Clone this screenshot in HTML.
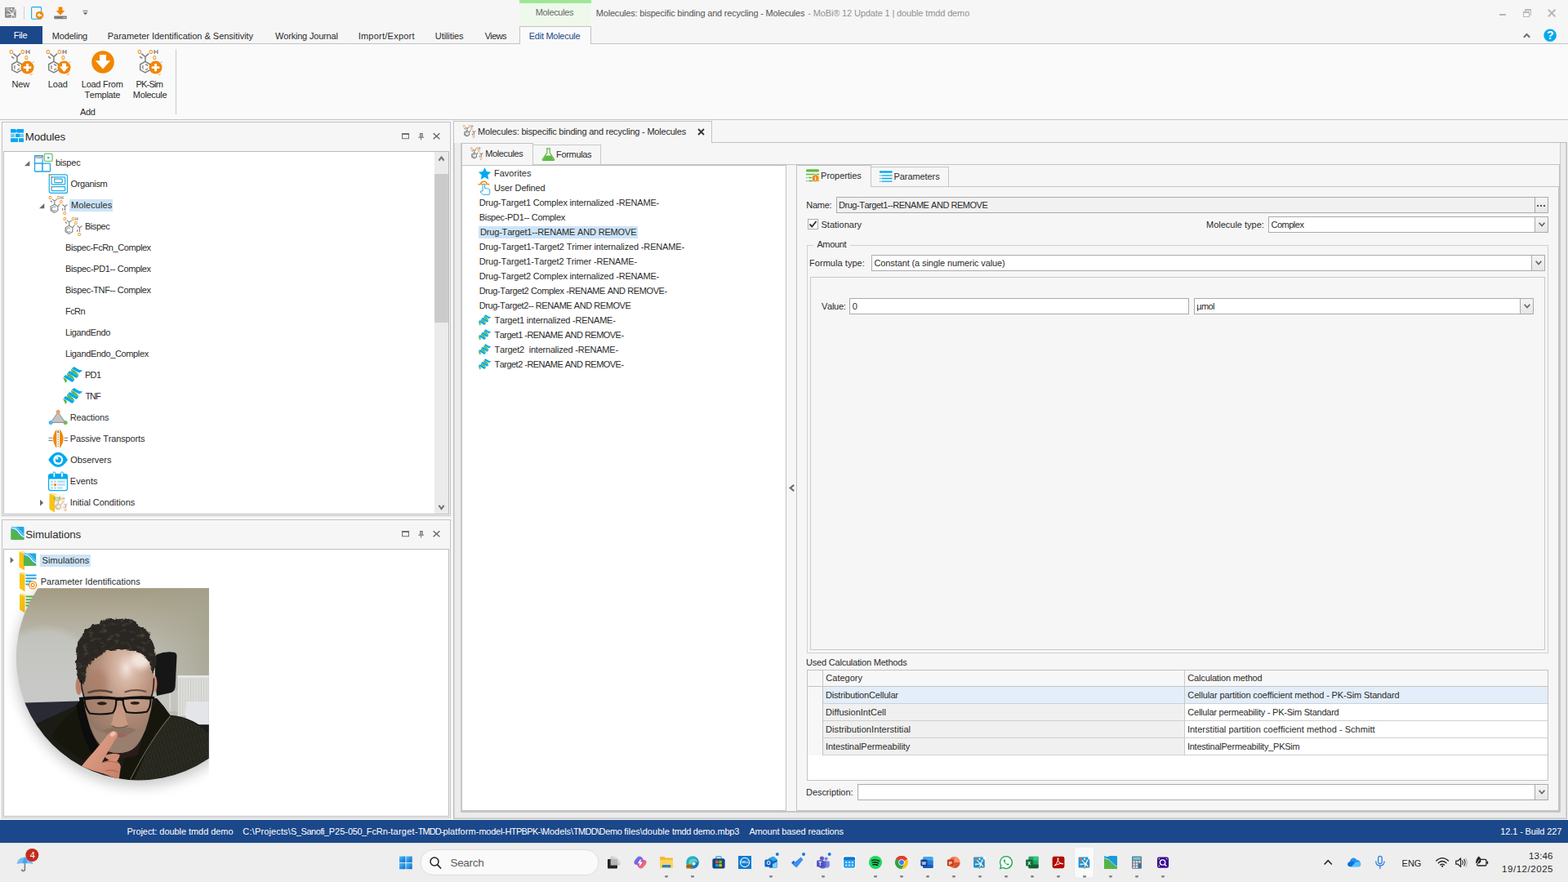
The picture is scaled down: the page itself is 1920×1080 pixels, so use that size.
<!DOCTYPE html>
<html lang="en"><head><meta charset="utf-8"><title>MoBi - Molecules</title>
<style>
html,body{margin:0;padding:0;}
body{width:1920px;height:1080px;overflow:hidden;background:#f6f6f6;font-family:"Liberation Sans",sans-serif;position:relative;}
.a{position:absolute;box-sizing:border-box;display:block;}
.t{position:absolute;white-space:pre;font-family:"Liberation Sans",sans-serif;font-kerning:none;font-variant-ligatures:none;}
svg{overflow:visible;}
</style></head><body>
<div class="a " style="left:0px;top:0px;width:1920px;height:54px;background:#f6f6f6;"></div>
<div class="a " style="left:636px;top:0px;width:88px;height:32px;background:#eef9ec;"></div>
<div class="a " style="left:636px;top:0px;width:88px;height:4px;background:#9fe797;"></div>
<div class="a " style="left:0px;top:54px;width:1920px;height:92px;background:#fafafa;"></div>
<div class="a " style="left:0px;top:53px;width:1920px;height:1px;background:#c3c3c3;"></div>
<div class="a " style="left:0px;top:146px;width:1920px;height:1px;background:#c3c3c3;"></div>
<div class="a " style="left:0px;top:32px;width:52px;height:22px;background:#1b488a;"></div>
<span class="t" style="left:16.80px;top:36px;font-size:11px;line-height:14px;color:#fff;letter-spacing:-0.311px;">File</span>
<div class="a " style="left:636px;top:32px;width:88px;height:22px;background:#fafafa;border:1px solid #c3c3c3;border-bottom:none;"></div>
<span class="t" style="left:63.80px;top:37px;font-size:11px;line-height:14px;color:#2b2b2b;letter-spacing:-0.175px;">Modeling</span>
<span class="t" style="left:131.80px;top:37px;font-size:11px;line-height:14px;color:#2b2b2b;letter-spacing:-0.022px;">Parameter Identification &amp; Sensitivity</span>
<span class="t" style="left:337.05px;top:37px;font-size:11px;line-height:14px;color:#2b2b2b;letter-spacing:-0.192px;">Working Journal</span>
<span class="t" style="left:438.68px;top:37px;font-size:11px;line-height:14px;color:#2b2b2b;letter-spacing:0.240px;">Import/Export</span>
<span class="t" style="left:532.85px;top:37px;font-size:11px;line-height:14px;color:#2b2b2b;letter-spacing:-0.100px;">Utilities</span>
<span class="t" style="left:593.65px;top:37px;font-size:11px;line-height:14px;color:#2b2b2b;letter-spacing:-0.624px;">Views</span>
<span class="t" style="left:647.80px;top:37px;font-size:11px;line-height:14px;color:#1b488a;letter-spacing:-0.270px;">Edit Molecule</span>
<span class="t" style="left:655.80px;top:8px;font-size:11px;line-height:14px;color:#686868;letter-spacing:-0.353px;">Molecules</span>
<span class="t" style="left:729.80px;top:9px;font-size:11px;line-height:14px;color:#555;letter-spacing:-0.201px;">Molecules: bispecific binding and recycling - Molecules</span>
<span class="t" style="left:989.21px;top:9px;font-size:11px;line-height:14px;color:#929292;letter-spacing:-0.133px;">- MoBi® 12 Update 1 | double tmdd demo</span>
<span class="t" style="left:14.50px;top:96px;font-size:11px;line-height:14px;color:#2b2b2b;letter-spacing:-0.215px;">New</span>
<span class="t" style="left:58.80px;top:96px;font-size:11px;line-height:14px;color:#2b2b2b;letter-spacing:-0.153px;">Load</span>
<span class="t" style="left:99.80px;top:96px;font-size:11px;line-height:14px;color:#2b2b2b;letter-spacing:-0.270px;">Load From</span>
<span class="t" style="left:103.45px;top:109px;font-size:11px;line-height:14px;color:#2b2b2b;letter-spacing:-0.288px;">Template</span>
<span class="t" style="left:166.50px;top:96px;font-size:11px;line-height:14px;color:#2b2b2b;letter-spacing:-0.791px;">PK-Sim</span>
<span class="t" style="left:162.80px;top:109px;font-size:11px;line-height:14px;color:#2b2b2b;letter-spacing:-0.319px;">Molecule</span>
<span class="t" style="left:98.08px;top:130px;font-size:11px;line-height:14px;color:#2b2b2b;letter-spacing:-0.421px;">Add</span>
<div class="a " style="left:215px;top:60px;width:1px;height:80px;background:#c9c9c9;"></div>
<div class="a " style="left:2px;top:149px;width:550px;height:483px;background:#f6f6f6;border:1px solid #c3c3c3;"></div>
<div class="a " style="left:4px;top:185px;width:546px;height:445px;background:#fff;border:1px solid #bcbcbc;"></div>
<span class="t" style="left:30.81px;top:159px;font-size:13.33px;line-height:17px;color:#2b2b2b;letter-spacing:-0.152px;">Modules</span>
<div class="a " style="left:2px;top:636px;width:550px;height:366px;background:#f6f6f6;border:1px solid #c3c3c3;"></div>
<div class="a " style="left:4px;top:672px;width:546px;height:328px;background:#fff;border:1px solid #bcbcbc;"></div>
<span class="t" style="left:31.29px;top:646px;font-size:13.33px;line-height:17px;color:#2b2b2b;letter-spacing:-0.092px;">Simulations</span>
<div class="a " style="left:532px;top:186px;width:17px;height:443px;background:#ebebeb;"></div>
<div class="a " style="left:532px;top:213px;width:17px;height:182px;background:#cbcbcb;"></div>
<div class="a " style="left:85px;top:244px;width:53px;height:15px;background:#cde4f7;"></div>
<span class="t" style="left:67.89px;top:192px;font-size:11px;line-height:14px;color:#2b2b2b;letter-spacing:-0.200px;">bispec</span>
<span class="t" style="left:86.48px;top:218px;font-size:11px;line-height:14px;color:#2b2b2b;letter-spacing:-0.348px;">Organism</span>
<span class="t" style="left:87.00px;top:244px;font-size:11px;line-height:14px;color:#2b2b2b;letter-spacing:0.085px;">Molecules</span>
<span class="t" style="left:103.90px;top:270px;font-size:11px;line-height:14px;color:#2b2b2b;letter-spacing:-0.425px;">Bispec</span>
<span class="t" style="left:80.00px;top:296px;font-size:11px;line-height:14px;color:#2b2b2b;letter-spacing:-0.409px;">Bispec-FcRn_Complex</span>
<span class="t" style="left:80.00px;top:322px;font-size:11px;line-height:14px;color:#2b2b2b;letter-spacing:-0.355px;">Bispec-PD1-- Complex</span>
<span class="t" style="left:80.00px;top:348px;font-size:11px;line-height:14px;color:#2b2b2b;letter-spacing:-0.354px;">Bispec-TNF-- Complex</span>
<span class="t" style="left:80.00px;top:374px;font-size:11px;line-height:14px;color:#2b2b2b;letter-spacing:-0.555px;">FcRn</span>
<span class="t" style="left:80.00px;top:400px;font-size:11px;line-height:14px;color:#2b2b2b;letter-spacing:-0.384px;">LigandEndo</span>
<span class="t" style="left:80.00px;top:426px;font-size:11px;line-height:14px;color:#2b2b2b;letter-spacing:-0.354px;">LigandEndo_Complex</span>
<span class="t" style="left:103.90px;top:452px;font-size:11px;line-height:14px;color:#2b2b2b;letter-spacing:-0.629px;">PD1</span>
<span class="t" style="left:104.55px;top:478px;font-size:11px;line-height:14px;color:#2b2b2b;letter-spacing:-1.147px;">TNF</span>
<span class="t" style="left:85.80px;top:504px;font-size:11px;line-height:14px;color:#2b2b2b;letter-spacing:-0.152px;">Reactions</span>
<span class="t" style="left:85.80px;top:530px;font-size:11px;line-height:14px;color:#2b2b2b;letter-spacing:-0.144px;">Passive Transports</span>
<span class="t" style="left:86.18px;top:556px;font-size:11px;line-height:14px;color:#2b2b2b;letter-spacing:-0.065px;">Observers</span>
<span class="t" style="left:85.80px;top:582px;font-size:11px;line-height:14px;color:#2b2b2b;letter-spacing:0.014px;">Events</span>
<span class="t" style="left:85.68px;top:608px;font-size:11px;line-height:14px;color:#2b2b2b;letter-spacing:-0.071px;">Initial Conditions</span>
<div class="a " style="left:49px;top:679px;width:62px;height:15px;background:#cde4f7;"></div>
<span class="t" style="left:51.50px;top:679px;font-size:11px;line-height:14px;color:#2b2b2b;letter-spacing:0.084px;">Simulations</span>
<span class="t" style="left:49.70px;top:705px;font-size:11px;line-height:14px;color:#2b2b2b;letter-spacing:0.014px;">Parameter Identifications</span>
<div class="a " style="left:555px;top:174px;width:1364px;height:829px;background:#ececec;border:1px solid #c0c0c0;"></div>
<div class="a " style="left:556px;top:175px;width:1362px;height:827px;border:1px solid #d6d6d6;border-top:none;"></div>
<div class="a " style="left:555px;top:148px;width:317px;height:27px;background:#f6f6f6;border:1px solid #c3c3c3;border-bottom:none;"></div>
<span class="t" style="left:585.10px;top:154px;font-size:11px;line-height:14px;color:#2b2b2b;letter-spacing:-0.212px;">Molecules: bispecific binding and recycling - Molecules</span>
<svg class="a" style="left:854px;top:157px;" width="9" height="9" viewBox="0 0 9 9"><path d="M1 1 L8 8 M8 1 L1 8" stroke="#333" stroke-width="1.8" fill="none"/></svg>
<div class="a " style="left:564px;top:175px;width:1347px;height:820px;background:#f6f6f6;border:1px solid #c9c9c9;border-top:none;"></div>
<div class="a " style="left:565px;top:201px;width:1345px;height:793px;background:#f6f6f6;border:1px solid #c3c3c3;"></div>
<div class="a " style="left:565px;top:175px;width:88px;height:27px;background:#f6f6f6;border:1px solid #c3c3c3;border-bottom:none;"></div>
<div class="a " style="left:652px;top:177px;width:84px;height:25px;background:#f6f6f6;border:1px solid #c9c9c9;"></div>
<span class="t" style="left:594.30px;top:181px;font-size:11px;line-height:14px;color:#2b2b2b;letter-spacing:-0.390px;">Molecules</span>
<span class="t" style="left:681.00px;top:182px;font-size:11px;line-height:14px;color:#2b2b2b;letter-spacing:-0.320px;">Formulas</span>
<div class="a " style="left:565px;top:202px;width:398px;height:791px;background:#fff;border:1px solid #c3c3c3;"></div>
<div class="a " style="left:586px;top:277px;width:195px;height:15px;background:#cde4f7;"></div>
<span class="t" style="left:604.90px;top:205px;font-size:11px;line-height:14px;color:#2b2b2b;letter-spacing:0.046px;">Favorites</span>
<span class="t" style="left:604.95px;top:223px;font-size:11px;line-height:14px;color:#2b2b2b;letter-spacing:-0.131px;">User Defined</span>
<span class="t" style="left:586.80px;top:241px;font-size:11px;line-height:14px;color:#2b2b2b;letter-spacing:-0.199px;">Drug-Target1 Complex internalized -RENAME-</span>
<span class="t" style="left:586.80px;top:259px;font-size:11px;line-height:14px;color:#2b2b2b;letter-spacing:-0.339px;">Bispec-PD1-- Complex</span>
<span class="t" style="left:588.00px;top:277px;font-size:11px;line-height:14px;color:#2b2b2b;letter-spacing:-0.178px;">Drug-Target1--RENAME AND REMOVE</span>
<span class="t" style="left:586.80px;top:295px;font-size:11px;line-height:14px;color:#2b2b2b;letter-spacing:-0.150px;">Drug-Target1-Target2 Trimer internalized -RENAME-</span>
<span class="t" style="left:586.80px;top:313px;font-size:11px;line-height:14px;color:#2b2b2b;letter-spacing:-0.170px;">Drug-Target1-Target2 Trimer -RENAME-</span>
<span class="t" style="left:586.80px;top:331px;font-size:11px;line-height:14px;color:#2b2b2b;letter-spacing:-0.199px;">Drug-Target2 Complex internalized -RENAME-</span>
<span class="t" style="left:586.80px;top:349px;font-size:11px;line-height:14px;color:#2b2b2b;letter-spacing:-0.409px;">Drug-Target2 Complex -RENAME AND REMOVE-</span>
<span class="t" style="left:586.80px;top:367px;font-size:11px;line-height:14px;color:#2b2b2b;letter-spacing:-0.448px;">Drug-Target2-- RENAME AND REMOVE</span>
<span class="t" style="left:605.55px;top:385px;font-size:11px;line-height:14px;color:#2b2b2b;letter-spacing:-0.226px;">Target1 internalized -RENAME-</span>
<span class="t" style="left:605.55px;top:403px;font-size:11px;line-height:14px;color:#2b2b2b;letter-spacing:-0.532px;">Target1 -RENAME AND REMOVE-</span>
<span class="t" style="left:605.55px;top:421px;font-size:11px;line-height:14px;color:#2b2b2b;letter-spacing:-0.213px;">Target2  internalized -RENAME-</span>
<span class="t" style="left:605.55px;top:439px;font-size:11px;line-height:14px;color:#2b2b2b;letter-spacing:-0.532px;">Target2 -RENAME AND REMOVE-</span>
<svg class="a" style="left:965.6px;top:593px;" width="7" height="9" viewBox="0 0 7 9"><path d="M6.2 0.9 L1.6 4.5 L6.2 8.1" fill="none" stroke="#6a6a6a" stroke-width="2"/></svg>
<div class="a " style="left:975px;top:228px;width:934px;height:765px;background:#f6f6f6;border:1px solid #c3c3c3;"></div>
<div class="a " style="left:975px;top:202px;width:92px;height:27px;background:#f6f6f6;border:1px solid #c3c3c3;border-bottom:none;"></div>
<div class="a " style="left:1066px;top:204px;width:96px;height:25px;background:#f6f6f6;border:1px solid #c6c6c6;"></div>
<span class="t" style="left:1005.10px;top:208px;font-size:11px;line-height:14px;color:#2b2b2b;letter-spacing:-0.048px;">Properties</span>
<span class="t" style="left:1094.50px;top:209px;font-size:11px;line-height:14px;color:#2b2b2b;letter-spacing:-0.073px;">Parameters</span>
<span class="t" style="left:987.20px;top:244px;font-size:11px;line-height:14px;color:#2b2b2b;letter-spacing:-0.248px;">Name:</span>
<div class="a " style="left:1024px;top:241px;width:872px;height:20px;background:#f1f1f1;border:1px solid #ababab;"></div>
<div class="a " style="left:1879px;top:241px;width:17px;height:20px;background:linear-gradient(#f4f4f4,#e6e6e6);border:1px solid #ababab;"></div>
<div class="a " style="left:1882px;top:251px;width:2px;height:2px;background:#555;"></div>
<div class="a " style="left:1886px;top:251px;width:2px;height:2px;background:#555;"></div>
<div class="a " style="left:1890px;top:251px;width:2px;height:2px;background:#555;"></div>
<span class="t" style="left:1027.00px;top:244px;font-size:11px;line-height:14px;color:#2b2b2b;letter-spacing:-0.468px;">Drug-Target1--RENAME AND REMOVE</span>
<div class="a " style="left:989px;top:268px;width:13px;height:13px;background:#fff;border:1px solid #ababab;"></div>
<svg class="a" style="left:990px;top:269px;" width="11" height="11" viewBox="0 0 11 11"><path d="M1.5 5.5 L4.2 8.5 L9.5 2" fill="none" stroke="#333" stroke-width="1.9"/></svg>
<span class="t" style="left:1005.50px;top:268px;font-size:11px;line-height:14px;color:#2b2b2b;letter-spacing:0.010px;">Stationary</span>
<span class="t" style="left:1477.00px;top:268px;font-size:11px;line-height:14px;color:#2b2b2b;letter-spacing:-0.009px;">Molecule type:</span>
<div class="a " style="left:1553px;top:265px;width:343px;height:20px;background:#fff;border:1px solid #ababab;"></div>
<div class="a " style="left:1879px;top:265px;width:17px;height:20px;background:linear-gradient(#f4f4f4,#e6e6e6);border:1px solid #ababab;"></div>
<svg class="a" style="left:1883.5px;top:272.0px;" width="8" height="6" viewBox="0 0 8 6"><path d="M0.6 0.8 L4 4.6 L7.4 0.8" fill="none" stroke="#666" stroke-width="1.7"/></svg>
<span class="t" style="left:1556.54px;top:268px;font-size:11px;line-height:14px;color:#2b2b2b;letter-spacing:-0.505px;">Complex</span>
<div class="a " style="left:988px;top:300px;width:908px;height:500px;border:1px solid #d0d0d0;"></div>
<div class="a " style="left:996px;top:292px;width:45px;height:14px;background:#f6f6f6;"></div>
<span class="t" style="left:1000.38px;top:292px;font-size:11px;line-height:14px;color:#2b2b2b;letter-spacing:-0.341px;">Amount</span>
<span class="t" style="left:991.00px;top:315px;font-size:11px;line-height:14px;color:#2b2b2b;letter-spacing:0.047px;">Formula type:</span>
<div class="a " style="left:1067px;top:312px;width:825px;height:20px;background:#fff;border:1px solid #ababab;"></div>
<div class="a " style="left:1875px;top:312px;width:17px;height:20px;background:linear-gradient(#f4f4f4,#e6e6e6);border:1px solid #ababab;"></div>
<svg class="a" style="left:1879.5px;top:319.0px;" width="8" height="6" viewBox="0 0 8 6"><path d="M0.6 0.8 L4 4.6 L7.4 0.8" fill="none" stroke="#666" stroke-width="1.7"/></svg>
<span class="t" style="left:1070.54px;top:315px;font-size:11px;line-height:14px;color:#2b2b2b;letter-spacing:-0.116px;">Constant (a single numeric value)</span>
<div class="a " style="left:992px;top:339px;width:900px;height:457px;border:1px solid #c9c9c9;"></div>
<span class="t" style="left:1006.05px;top:368px;font-size:11px;line-height:14px;color:#2b2b2b;letter-spacing:-0.287px;">Value:</span>
<div class="a " style="left:1040px;top:365px;width:416px;height:20px;background:#fff;border:1px solid #ababab;"></div>
<span class="t" style="left:1043.67px;top:368px;font-size:11px;line-height:14px;color:#2b2b2b;">0</span>
<div class="a " style="left:1462px;top:365px;width:416px;height:20px;background:#fff;border:1px solid #ababab;"></div>
<div class="a " style="left:1861px;top:365px;width:17px;height:20px;background:linear-gradient(#f4f4f4,#e6e6e6);border:1px solid #ababab;"></div>
<svg class="a" style="left:1865.5px;top:372.0px;" width="8" height="6" viewBox="0 0 8 6"><path d="M0.6 0.8 L4 4.6 L7.4 0.8" fill="none" stroke="#666" stroke-width="1.7"/></svg>
<span class="t" style="left:1465.15px;top:368px;font-size:11px;line-height:14px;color:#2b2b2b;letter-spacing:-0.558px;">µmol</span>
<span class="t" style="left:987.05px;top:804px;font-size:11px;line-height:14px;color:#2b2b2b;letter-spacing:-0.207px;">Used Calculation Methods</span>
<div class="a " style="left:988px;top:820px;width:908px;height:136px;background:#fff;border:1px solid #c3c3c3;"></div>
<div class="a " style="left:989px;top:821px;width:906px;height:20px;background:#f7f7f7;"></div>
<div class="a " style="left:989px;top:840px;width:906px;height:1px;background:#c3c3c3;"></div>
<div class="a " style="left:989px;top:841px;width:19px;height:84px;background:#f7f7f7;"></div>
<div class="a " style="left:1007px;top:821px;width:1px;height:104px;background:#c3c3c3;"></div>
<div class="a " style="left:1450px;top:821px;width:1px;height:104px;background:#c9c9c9;"></div>
<div class="a " style="left:1008px;top:841px;width:887px;height:20px;background:#e3eefa;"></div>
<div class="a " style="left:1008px;top:861px;width:887px;height:1px;background:#d0d0d0;"></div>
<span class="t" style="left:1011.00px;top:844px;font-size:11px;line-height:14px;color:#2b2b2b;letter-spacing:-0.175px;">DistributionCellular</span>
<span class="t" style="left:1454.34px;top:844px;font-size:11px;line-height:14px;color:#2b2b2b;letter-spacing:-0.133px;">Cellular partition coefficient method - PK-Sim Standard</span>
<div class="a " style="left:1008px;top:862px;width:442px;height:20px;background:#f0f0f0;"></div>
<div class="a " style="left:1008px;top:882px;width:887px;height:1px;background:#d0d0d0;"></div>
<span class="t" style="left:1011.00px;top:865px;font-size:11px;line-height:14px;color:#2b2b2b;">DiffusionIntCell</span>
<span class="t" style="left:1454.34px;top:865px;font-size:11px;line-height:14px;color:#2b2b2b;letter-spacing:-0.238px;">Cellular permeability - PK-Sim Standard</span>
<div class="a " style="left:1008px;top:883px;width:442px;height:20px;background:#f0f0f0;"></div>
<div class="a " style="left:1008px;top:903px;width:887px;height:1px;background:#d0d0d0;"></div>
<span class="t" style="left:1011.00px;top:886px;font-size:11px;line-height:14px;color:#2b2b2b;letter-spacing:0.085px;">DistributionInterstitial</span>
<span class="t" style="left:1453.88px;top:886px;font-size:11px;line-height:14px;color:#2b2b2b;letter-spacing:0.033px;">Interstitial partition coefficient method - Schmitt</span>
<div class="a " style="left:1008px;top:904px;width:442px;height:20px;background:#f0f0f0;"></div>
<div class="a " style="left:1008px;top:924px;width:887px;height:1px;background:#d0d0d0;"></div>
<span class="t" style="left:1010.88px;top:907px;font-size:11px;line-height:14px;color:#2b2b2b;letter-spacing:-0.053px;">IntestinalPermeability</span>
<span class="t" style="left:1453.88px;top:907px;font-size:11px;line-height:14px;color:#2b2b2b;letter-spacing:-0.239px;">IntestinalPermeability_PKSim</span>
<div class="a " style="left:1450px;top:821px;width:1px;height:104px;background:#c9c9c9;"></div>
<span class="t" style="left:1011.34px;top:823px;font-size:11px;line-height:14px;color:#2b2b2b;letter-spacing:0.007px;">Category</span>
<span class="t" style="left:1454.34px;top:823px;font-size:11px;line-height:14px;color:#2b2b2b;letter-spacing:-0.165px;">Calculation method</span>
<span class="t" style="left:987.00px;top:963px;font-size:11px;line-height:14px;color:#2b2b2b;letter-spacing:-0.047px;">Description:</span>
<div class="a " style="left:1050px;top:960px;width:846px;height:20px;background:#fff;border:1px solid #ababab;"></div>
<div class="a " style="left:1879px;top:960px;width:17px;height:20px;background:linear-gradient(#f4f4f4,#e6e6e6);border:1px solid #ababab;"></div>
<svg class="a" style="left:1883.5px;top:967.0px;" width="8" height="6" viewBox="0 0 8 6"><path d="M0.6 0.8 L4 4.6 L7.4 0.8" fill="none" stroke="#666" stroke-width="1.7"/></svg>
<div class="a " style="left:0px;top:1004px;width:1920px;height:28px;background:#1b488a;"></div>
<span class="t" style="left:155.50px;top:1011px;font-size:11px;line-height:14px;color:#fff;letter-spacing:-0.058px;">Project: double tmdd demo</span>
<span class="t" style="left:297.34px;top:1011px;font-size:11px;line-height:14px;color:#fff;"><span style="letter-spacing:0.200px">C:\</span><span style="letter-spacing:0.123px">Projects\</span><span style="letter-spacing:-0.429px">S_Sanofi_</span><span style="letter-spacing:-0.016px">P25-</span><span style="letter-spacing:-0.411px">050_</span><span style="letter-spacing:-0.102px">FcRn-</span><span style="letter-spacing:0.261px">target-</span><span style="letter-spacing:-0.979px">TMDD-</span><span style="letter-spacing:0.064px">platform-</span><span style="letter-spacing:-0.249px">model-</span><span style="letter-spacing:-0.654px">HTPBPK-\</span><span style="letter-spacing:-0.094px">Models\</span><span style="letter-spacing:-0.636px">TMDD\</span><span style="letter-spacing:-0.330px">Demo </span><span style="letter-spacing:-0.037px">files\</span><span style="letter-spacing:0.030px">double </span><span style="letter-spacing:-0.361px">tmdd </span><span style="letter-spacing:-0.180px">demo.mbp3</span></span>
<span class="t" style="left:917.38px;top:1011px;font-size:11px;line-height:14px;color:#fff;letter-spacing:-0.148px;">Amount based reactions</span>
<span class="t" style="left:1837.36px;top:1011px;font-size:11px;line-height:14px;color:#fff;letter-spacing:-0.138px;">12.1 - Build 227</span>
<div class="a " style="left:0px;top:1032px;width:1920px;height:48px;background:#eeeeee;"></div>
<div class="a " style="left:0px;top:1032px;width:1920px;height:1px;background:#e3e1df;"></div>
<svg class="a" style="left:0;top:0" width="1920" height="1032" viewBox="0 0 1920 1032"><g transform="translate(0 0)"><rect x="6" y="9" width="13.6" height="12.8" rx="1.2" fill="#8c8c8c"/><circle cx="19.6" cy="10.2" r="1.9" fill="#f6f6f6"/><path d="M9.8 11.8 L15.2 17.2 L17 13.4 M15.2 17.2 L9.4 17.8 M15.2 17.2 L13.8 21.8 M15.2 17.2 L18 20.4" stroke="#f4f4f4" stroke-width="1.1" fill="none"/><circle cx="9.6" cy="11.6" r="1.6" fill="#8c8c8c" stroke="#f2f2f2" stroke-width="0.9"/><rect x="13" y="10.2" width="2" height="2" fill="#f2f2f2"/><circle cx="17.1" cy="13.3" r="1.3" fill="#8c8c8c" stroke="#f2f2f2" stroke-width="0.8"/><circle cx="15.2" cy="17.3" r="1.5" fill="#fafafa"/><circle cx="9.2" cy="17.8" r="1.1" fill="#8c8c8c" stroke="#f2f2f2" stroke-width="0.8"/></g><rect x="29" y="8" width="1" height="16" fill="#cfcfcf"/><g transform="translate(38 8)"><rect x="0.6" y="0.6" width="12" height="14.6" rx="1.2" fill="none" stroke="#1fa9e6" stroke-width="1.1"/><circle cx="10.6" cy="10.7" r="4.8" fill="#f18600"/><path d="M7.4 10.4 L10.4 7.6 V9.2 Q13.4 9.4 13.6 13 Q12.4 11.4 10.4 11.6 V13.2 Z" fill="#fff"/></g><g transform="translate(66 8)"><path d="M5.6 0.5 H10.4 V5 H13.4 L8 10.6 L2.6 5 H5.6 Z" fill="#f18600"/><rect x="0.3" y="11.6" width="15.4" height="3.6" rx="0.5" fill="#7a7a7a"/><rect x="11" y="13" width="3.4" height="1" fill="#cfcfcf"/></g><g transform="translate(101 12.4)"><path d="M0.5 0.9 H6.5" stroke="#777" stroke-width="1.1"/><path d="M0.6 2.8 H6.4 L3.5 5.8 Z" fill="#666"/></g><rect x="1836" y="17" width="8" height="2" fill="#b7b7b7"/><g transform="translate(1865 11)"><rect x="2.5" y="0.5" width="7" height="6.6" fill="none" stroke="#b9b9b9" stroke-width="1"/><rect x="2" y="0" width="8" height="2" fill="#b9b9b9"/><rect x="0.5" y="3.5" width="7" height="6" fill="#f6f6f6" stroke="#b9b9b9" stroke-width="1"/><rect x="0" y="3" width="8" height="2" fill="#b9b9b9"/></g><g transform="translate(1895 11)"><path d="M0.8 0.8 L9.4 9.4 M9.4 0.8 L0.8 9.4" stroke="#b5b5b5" stroke-width="2" fill="none"/></g><g transform="translate(1865 40)"><path d="M0.8 5.8 L4.5 2 L8.2 5.8" stroke="#707070" stroke-width="2" fill="none"/></g><g transform="translate(1890.1 35.3)"><circle cx="8" cy="8" r="7.8" fill="#00a9f0"/><text x="8.1" y="13.2" font-family="Liberation Sans, sans-serif" font-size="14" font-weight="bold" text-anchor="middle" fill="#fff">?</text></g><g transform="translate(9.5 60)"><text x="2.1" y="6.3" font-family="Liberation Sans, sans-serif" font-size="7.8" font-weight="bold" text-anchor="start" fill="#f18600" textLength="4.8" lengthAdjust="spacingAndGlyphs">O</text><text x="16" y="6.3" font-family="Liberation Sans, sans-serif" font-size="7.8" font-weight="bold" text-anchor="start" fill="#f18600" textLength="4.8" lengthAdjust="spacingAndGlyphs">O</text><text x="21.4" y="6.3" font-family="Liberation Sans, sans-serif" font-size="7.8" font-weight="bold" text-anchor="start" fill="#7f7f7f" textLength="6" lengthAdjust="spacingAndGlyphs">H</text><path d="M6.8 5.6 L11.4 9.6 L15.6 5.6 M11.4 9.6 V15.4 M4.6 9.2 L7.6 11.6" stroke="#7f7f7f" stroke-width="1.5" fill="none"/><path d="M11.4 15.4 L17.2 18.8 V25.6 L11.4 28.8 L5.2 25.6 V18.8 Z" stroke="#7f7f7f" stroke-width="1.5" fill="none"/><path d="M8.4 20 V24.4 M11.6 18.6 L14.6 20.4 M11.6 25.8 L14.6 24" stroke="#7f7f7f" stroke-width="1.3" fill="none"/><text x="20.8" y="13.1" font-family="Liberation Sans, sans-serif" font-size="7" font-weight="bold" text-anchor="start" fill="#f18600" textLength="4.2" lengthAdjust="spacingAndGlyphs">O</text><circle cx="24" cy="22.6" r="8" fill="#f18600"/><path d="M30.6 16.6 L31.6 15.6" stroke="#666" stroke-width="1"/><path d="M27.6 31.6 Q29.4 31.4 30.2 30.2" stroke="#f18600" stroke-width="0.9" fill="none"/><path d="M24 17.9 V27.3 M19.3 22.6 H28.7" stroke="#fff" stroke-width="2.9"/></g><g transform="translate(54.5 60)"><text x="2.1" y="6.3" font-family="Liberation Sans, sans-serif" font-size="7.8" font-weight="bold" text-anchor="start" fill="#f18600" textLength="4.8" lengthAdjust="spacingAndGlyphs">O</text><text x="16" y="6.3" font-family="Liberation Sans, sans-serif" font-size="7.8" font-weight="bold" text-anchor="start" fill="#f18600" textLength="4.8" lengthAdjust="spacingAndGlyphs">O</text><text x="21.4" y="6.3" font-family="Liberation Sans, sans-serif" font-size="7.8" font-weight="bold" text-anchor="start" fill="#7f7f7f" textLength="6" lengthAdjust="spacingAndGlyphs">H</text><path d="M6.8 5.6 L11.4 9.6 L15.6 5.6 M11.4 9.6 V15.4 M4.6 9.2 L7.6 11.6" stroke="#7f7f7f" stroke-width="1.5" fill="none"/><path d="M11.4 15.4 L17.2 18.8 V25.6 L11.4 28.8 L5.2 25.6 V18.8 Z" stroke="#7f7f7f" stroke-width="1.5" fill="none"/><path d="M8.4 20 V24.4 M11.6 18.6 L14.6 20.4 M11.6 25.8 L14.6 24" stroke="#7f7f7f" stroke-width="1.3" fill="none"/><text x="20.8" y="13.1" font-family="Liberation Sans, sans-serif" font-size="7" font-weight="bold" text-anchor="start" fill="#f18600" textLength="4.2" lengthAdjust="spacingAndGlyphs">O</text><circle cx="24" cy="22.6" r="8" fill="#f18600"/><path d="M30.6 16.6 L31.6 15.6" stroke="#666" stroke-width="1"/><path d="M27.6 31.6 Q29.4 31.4 30.2 30.2" stroke="#f18600" stroke-width="0.9" fill="none"/><path d="M21.6 17.4 H26.4 V21.4 H29.6 L24 28 L18.4 21.4 H21.6 Z" fill="#fff"/></g><g transform="translate(112 62)"><circle cx="14" cy="14" r="13.8" fill="#f18600"/><path d="M10 5 H18 V12.2 H23.2 L14 22.6 L4.8 12.2 H10 Z" fill="#fff"/></g><g transform="translate(166.5 60)"><text x="2.1" y="6.3" font-family="Liberation Sans, sans-serif" font-size="7.8" font-weight="bold" text-anchor="start" fill="#f18600" textLength="4.8" lengthAdjust="spacingAndGlyphs">O</text><text x="16" y="6.3" font-family="Liberation Sans, sans-serif" font-size="7.8" font-weight="bold" text-anchor="start" fill="#f18600" textLength="4.8" lengthAdjust="spacingAndGlyphs">O</text><text x="21.4" y="6.3" font-family="Liberation Sans, sans-serif" font-size="7.8" font-weight="bold" text-anchor="start" fill="#7f7f7f" textLength="6" lengthAdjust="spacingAndGlyphs">H</text><path d="M6.8 5.6 L11.4 9.6 L15.6 5.6 M11.4 9.6 V15.4 M4.6 9.2 L7.6 11.6" stroke="#7f7f7f" stroke-width="1.5" fill="none"/><path d="M11.4 15.4 L17.2 18.8 V25.6 L11.4 28.8 L5.2 25.6 V18.8 Z" stroke="#7f7f7f" stroke-width="1.5" fill="none"/><path d="M8.4 20 V24.4 M11.6 18.6 L14.6 20.4 M11.6 25.8 L14.6 24" stroke="#7f7f7f" stroke-width="1.3" fill="none"/><text x="20.8" y="13.1" font-family="Liberation Sans, sans-serif" font-size="7" font-weight="bold" text-anchor="start" fill="#f18600" textLength="4.2" lengthAdjust="spacingAndGlyphs">O</text><circle cx="24" cy="22.6" r="8" fill="#f18600"/><path d="M30.6 16.6 L31.6 15.6" stroke="#666" stroke-width="1"/><path d="M27.6 31.6 Q29.4 31.4 30.2 30.2" stroke="#f18600" stroke-width="0.9" fill="none"/><path d="M24 17.9 V27.3 M19.3 22.6 H28.7" stroke="#fff" stroke-width="2.9"/></g><g transform="translate(13 158)"><rect x="0" y="0" width="16" height="4.6" fill="#00a9f0"/><rect x="6.3" y="0" width="1.6" height="1" fill="#f6f6f6"/><rect x="6.3" y="3.6" width="1.6" height="1" fill="#f6f6f6"/><rect x="0" y="5.8" width="5" height="4.2" fill="#6ccaf5"/><rect x="6" y="5.8" width="5" height="4.2" fill="#00a9f0"/><rect x="11" y="5.8" width="5" height="4.2" fill="#6ccaf5"/><rect x="0" y="11.2" width="9" height="4.8" fill="#00a9f0"/><rect x="10" y="11.2" width="6" height="4.8" fill="#00a9f0"/></g><g transform="translate(13.5 645)"><rect x="0" y="0" width="16" height="16" rx="1" fill="#1fa9e6"/><path d="M0 3 Q6 4 9 9 Q12 13 16 14 V16 H0 Z" fill="#55b447"/><path d="M0 1.2 Q7 2.4 10.2 7.6 Q12.8 11.6 16 12.4" stroke="#fff" stroke-width="1.3" fill="none"/><path d="M3 0 Q9 1.4 12 6 Q14 9 16 9.6" stroke="#bfe6fa" stroke-width="0.9" fill="none"/></g><g transform="translate(492 163)"><rect x="0.5" y="0.5" width="8" height="6.2" fill="none" stroke="#707070" stroke-width="1"/><rect x="0" y="0" width="9" height="2" fill="#707070"/></g><g transform="translate(512 163)"><path d="M2 0.5 H5.6 M2.5 0.5 V5 M5.1 0.5 V5 M4.3 0.5 V5 M0.2 5.2 H7 M3.6 5.2 V8.4" stroke="#707070" stroke-width="1" fill="none"/></g><g transform="translate(530 162.8)"><path d="M0.6 0.4 L8.4 7.4 M8.4 0.4 L0.6 7.4" stroke="#6a6a6a" stroke-width="1.5" fill="none"/></g><g transform="translate(492 650)"><rect x="0.5" y="0.5" width="8" height="6.2" fill="none" stroke="#707070" stroke-width="1"/><rect x="0" y="0" width="9" height="2" fill="#707070"/></g><g transform="translate(512 650)"><path d="M2 0.5 H5.6 M2.5 0.5 V5 M5.1 0.5 V5 M4.3 0.5 V5 M0.2 5.2 H7 M3.6 5.2 V8.4" stroke="#707070" stroke-width="1" fill="none"/></g><g transform="translate(530 649.8)"><path d="M0.6 0.4 L8.4 7.4 M8.4 0.4 L0.6 7.4" stroke="#6a6a6a" stroke-width="1.5" fill="none"/></g><g transform="translate(536.5 190.5)"><path d="M0.9 6.2 L4 2 L7.1 6.2" stroke="#707070" stroke-width="2" fill="none"/></g><g transform="translate(536.5 617)"><path d="M0.9 1.8 L4 6 L7.1 1.8" stroke="#707070" stroke-width="2" fill="none"/></g><path d="M36.3 197 V203.3 H30 Z" fill="#6a6a6a"/><path d="M54.3 249 V255.3 H48 Z" fill="#6a6a6a"/><path d="M49 611.8 L53.2 615.7 L49 619.6 Z" fill="#6a6a6a"/><path d="M12.6 682 L16.8 685.9 L12.6 689.8 Z" fill="#6a6a6a"/><g transform="translate(41.5 187)"><rect x="1" y="3.6" width="9.6" height="9.6" fill="#fff" stroke="#1fa9e6" stroke-width="1.3"/><rect x="1" y="13.2" width="9.6" height="9.8" rx="0.8" fill="#fff" stroke="#1fa9e6" stroke-width="1.3"/><rect x="10.6" y="13.2" width="9.4" height="9.8" rx="0.8" fill="#fff" stroke="#1fa9e6" stroke-width="1.3"/><rect x="1.8" y="5" width="10" height="2.8" fill="#e4e4e4"/><text x="2" y="7.4" font-family="Liberation Sans, sans-serif" font-size="3" font-weight="bold" text-anchor="start" fill="#8a8a8a" textLength="9.6" lengthAdjust="spacingAndGlyphs">PKSIM</text><rect x="12.8" y="1.2" width="9.8" height="9.2" rx="1.6" fill="#fff" stroke="#86c976" stroke-width="1.5"/><rect x="16.6" y="5" width="2.2" height="2.2" fill="#1fa9e6"/></g><g transform="translate(59.5 213)"><rect x="0.8" y="0.8" width="22.2" height="22.6" rx="2" fill="#fff" stroke="#1fa9e6" stroke-width="1.2"/><rect x="3.6" y="3.8" width="16.6" height="9" rx="0.8" fill="none" stroke="#1fa9e6" stroke-width="1.2"/><rect x="7.2" y="6.2" width="9.6" height="4.4" rx="0.8" fill="none" stroke="#1fa9e6" stroke-width="1.2"/><rect x="3.6" y="15.6" width="16.6" height="5" rx="0.8" fill="none" stroke="#1fa9e6" stroke-width="1.2"/><rect x="0" y="0" width="1.8" height="1.8" fill="#f18600"/><rect x="3" y="3" width="1.6" height="1.6" fill="#f18600"/><rect x="6.6" y="5.4" width="1.6" height="1.6" fill="#f18600"/><rect x="3" y="14.8" width="1.6" height="1.6" fill="#f18600"/></g><g transform="translate(59.5 239.5)"><text x="2.0" y="4.05" font-family="Liberation Sans, sans-serif" font-size="5.1" font-weight="bold" text-anchor="middle" fill="#f18600">O</text><text x="10.3" y="4.0" font-family="Liberation Sans, sans-serif" font-size="5" font-weight="bold" text-anchor="start" fill="#f18600" textLength="3.9" lengthAdjust="spacingAndGlyphs">O</text><text x="14.5" y="4.0" font-family="Liberation Sans, sans-serif" font-size="5" font-weight="bold" text-anchor="start" fill="#7d7d7d" textLength="3.7" lengthAdjust="spacingAndGlyphs">H</text><path d="M4.6 4.4 L7.3 6.8 L10.2 4.4 M7.3 6.8 V11.2 M2.2 6.2 L4.4 8" stroke="#7d7d7d" stroke-width="1.1" fill="none"/><path d="M7 10.8 L11.4 13.3 V18.3 L7 20.9 L2.6 18.3 V13.3 Z" stroke="#7d7d7d" stroke-width="1.1" fill="none"/><path d="M8.6 14.6 A2.6 2.6 0 1 0 8.6 17.6" stroke="#7d7d7d" stroke-width="1" fill="none"/><text x="15.5" y="9.55" font-family="Liberation Sans, sans-serif" font-size="5.1" font-weight="bold" text-anchor="middle" fill="#f18600">O</text><path d="M11.6 13 L13.8 10" stroke="#7d7d7d" stroke-width="1.1" fill="none"/><path d="M17 11 L20 13.4 L23 11 M20 13.4 V18.6 M17.3 15.6 V18.6" stroke="#7d7d7d" stroke-width="1.1" fill="none"/><text x="19.7" y="23.65" font-family="Liberation Sans, sans-serif" font-size="5.1" font-weight="bold" text-anchor="middle" fill="#f18600">O</text></g><g transform="translate(77.5 265.5)"><text x="2.0" y="4.05" font-family="Liberation Sans, sans-serif" font-size="5.1" font-weight="bold" text-anchor="middle" fill="#f18600">O</text><text x="10.3" y="4.0" font-family="Liberation Sans, sans-serif" font-size="5" font-weight="bold" text-anchor="start" fill="#f18600" textLength="3.9" lengthAdjust="spacingAndGlyphs">O</text><text x="14.5" y="4.0" font-family="Liberation Sans, sans-serif" font-size="5" font-weight="bold" text-anchor="start" fill="#7d7d7d" textLength="3.7" lengthAdjust="spacingAndGlyphs">H</text><path d="M4.6 4.4 L7.3 6.8 L10.2 4.4 M7.3 6.8 V11.2 M2.2 6.2 L4.4 8" stroke="#7d7d7d" stroke-width="1.1" fill="none"/><path d="M7 10.8 L11.4 13.3 V18.3 L7 20.9 L2.6 18.3 V13.3 Z" stroke="#7d7d7d" stroke-width="1.1" fill="none"/><path d="M8.6 14.6 A2.6 2.6 0 1 0 8.6 17.6" stroke="#7d7d7d" stroke-width="1" fill="none"/><text x="15.5" y="9.55" font-family="Liberation Sans, sans-serif" font-size="5.1" font-weight="bold" text-anchor="middle" fill="#f18600">O</text><path d="M11.6 13 L13.8 10" stroke="#7d7d7d" stroke-width="1.1" fill="none"/><path d="M17 11 L20 13.4 L23 11 M20 13.4 V18.6 M17.3 15.6 V18.6" stroke="#7d7d7d" stroke-width="1.1" fill="none"/><text x="19.7" y="23.65" font-family="Liberation Sans, sans-serif" font-size="5.1" font-weight="bold" text-anchor="middle" fill="#f18600">O</text></g><g transform="translate(77 449)"><path d="M0.1 13.2 L3.2 20 L5.1 17.6 L3.8 14.6 Z" fill="#5fb946"/><path d="M4.9 7.8 L9 9.4 Q12.6 11.6 13.9 14.6 L14 16.2 L5.4 11.2 Z" fill="#5fb946"/><path d="M9.9 2.8 L14 4.4 Q17.6 6.6 18.9 9.6 L19 11.2 L10.4 6.2 Z" fill="#5fb946"/><path d="M3.3 10.1 L0.8 12.5 L11.3 19 L14.2 16.4 Z" fill="#00a9f0"/><path d="M8.3 5 L5.8 7.5 L16.4 14 L19.2 11.4 Z" fill="#00a9f0"/><path d="M13.5 0 L10.8 2.5 L20 7.6 Q22.6 6.6 23.9 4.2 Q21 4.6 19 3.2 Z" fill="#00a9f0"/></g><g transform="translate(77 475)"><path d="M0.1 13.2 L3.2 20 L5.1 17.6 L3.8 14.6 Z" fill="#5fb946"/><path d="M4.9 7.8 L9 9.4 Q12.6 11.6 13.9 14.6 L14 16.2 L5.4 11.2 Z" fill="#5fb946"/><path d="M9.9 2.8 L14 4.4 Q17.6 6.6 18.9 9.6 L19 11.2 L10.4 6.2 Z" fill="#5fb946"/><path d="M3.3 10.1 L0.8 12.5 L11.3 19 L14.2 16.4 Z" fill="#00a9f0"/><path d="M8.3 5 L5.8 7.5 L16.4 14 L19.2 11.4 Z" fill="#00a9f0"/><path d="M13.5 0 L10.8 2.5 L20 7.6 Q22.6 6.6 23.9 4.2 Q21 4.6 19 3.2 Z" fill="#00a9f0"/></g><g transform="translate(59.5 499)"><path d="M11.6 5.6 L20.6 18.4 H2.6 Z" fill="#c3c3c3" stroke="#8b8b8b" stroke-width="1"/><circle cx="11.6" cy="5.2" r="2.5" fill="#eba463"/><circle cx="2.6" cy="18.4" r="2.5" fill="#4fb5ee"/><circle cx="20.6" cy="18.4" r="2.5" fill="#6cbb5e"/></g><g transform="translate(59.5 525)"><path d="M9.8 0.5 Q1.2 12.2 9.8 23.9 Z" fill="#f18600"/><path d="M13.6 0.5 Q22.6 12.2 13.6 23.9 Z" fill="#f18600"/><path d="M11.7 4 V22.4" stroke="#444" stroke-width="0.9" stroke-dasharray="1.3 1.5"/><path d="M11.7 1 L13 4.6 H10.4 Z" fill="#777"/><path d="M0 11.2 H5 M0 14.5 H5 M19 11.2 H23.6 M19 14.5 H23.6" stroke="#7a7a7a" stroke-width="1"/></g><g transform="translate(59 551)"><path d="M0.2 12 Q6 2.8 12.2 2.8 Q18.4 2.8 24 12 Q18.4 21 12.2 21 Q6 21 0.2 12 Z" fill="#00a9f0"/><circle cx="12.2" cy="12" r="6" fill="#fff"/><circle cx="12.4" cy="12" r="3.6" fill="#00a9f0"/><circle cx="11" cy="10.4" r="1.4" fill="#fff"/></g><g transform="translate(59 577)"><rect x="0.6" y="3.6" width="22.8" height="20" rx="2.4" fill="#fff" stroke="#00a9f0" stroke-width="1.2"/><path d="M0.6 9.6 V6 Q0.6 3.6 3 3.6 H21 Q23.4 3.6 23.4 6 V9.6 Z" fill="#00a9f0"/><rect x="6" y="1" width="2.8" height="6.4" rx="1.2" fill="#fff" stroke="#00a9f0" stroke-width="1"/><rect x="15.6" y="1" width="2.8" height="6.4" rx="1.2" fill="#fff" stroke="#00a9f0" stroke-width="1"/><rect x="3" y="11.4" width="3" height="2.6" fill="#b5e0f8"/><rect x="7" y="11.4" width="3" height="2.6" fill="#b5e0f8"/><rect x="11.2" y="11.4" width="9.6" height="2.6" fill="#b5e0f8"/><rect x="3" y="15.2" width="3" height="2.6" fill="#b5e0f8"/><rect x="7" y="15.2" width="3" height="2.8" fill="#f08a1c"/><rect x="11.2" y="15.2" width="9.6" height="2.6" fill="#b5e0f8"/><rect x="3" y="19.2" width="3" height="2.6" fill="#b5e0f8"/><rect x="7" y="19.2" width="3" height="2.6" fill="#b5e0f8"/><rect x="11.2" y="19.2" width="6.6" height="2.6" fill="#b5e0f8"/></g><g transform="translate(59 603)"><path d="M1.5 1.5 L8 4 V24.5 L1.5 20.5 Z" fill="#fbc311"/><path d="M1.5 1.5 L4.5 0.5 L10 2 L8 4 Z" fill="#fde29a"/><rect x="7.4" y="5" width="7.4" height="4.6" fill="#6cbb5e"/><text x="11.1" y="9.1" font-family="Liberation Sans, sans-serif" font-size="4.6" font-weight="bold" text-anchor="middle" fill="#fff">IC</text><g transform="translate(7 6) scale(0.72)"><text x="2.0" y="4.05" font-family="Liberation Sans, sans-serif" font-size="5.1" font-weight="bold" text-anchor="middle" fill="#f18600">O</text><text x="10.3" y="4.0" font-family="Liberation Sans, sans-serif" font-size="5" font-weight="bold" text-anchor="start" fill="#f18600" textLength="3.9" lengthAdjust="spacingAndGlyphs">O</text><text x="14.5" y="4.0" font-family="Liberation Sans, sans-serif" font-size="5" font-weight="bold" text-anchor="start" fill="#7d7d7d" textLength="3.7" lengthAdjust="spacingAndGlyphs">H</text><path d="M4.6 4.4 L7.3 6.8 L10.2 4.4 M7.3 6.8 V11.2 M2.2 6.2 L4.4 8" stroke="#7d7d7d" stroke-width="1.1" fill="none"/><path d="M7 10.8 L11.4 13.3 V18.3 L7 20.9 L2.6 18.3 V13.3 Z" stroke="#7d7d7d" stroke-width="1.1" fill="none"/><path d="M8.6 14.6 A2.6 2.6 0 1 0 8.6 17.6" stroke="#7d7d7d" stroke-width="1" fill="none"/><text x="15.5" y="9.55" font-family="Liberation Sans, sans-serif" font-size="5.1" font-weight="bold" text-anchor="middle" fill="#f18600">O</text><path d="M11.6 13 L13.8 10" stroke="#7d7d7d" stroke-width="1.1" fill="none"/><path d="M17 11 L20 13.4 L23 11 M20 13.4 V18.6 M17.3 15.6 V18.6" stroke="#7d7d7d" stroke-width="1.1" fill="none"/><text x="19.7" y="23.65" font-family="Liberation Sans, sans-serif" font-size="5.1" font-weight="bold" text-anchor="middle" fill="#f18600">O</text></g><rect x="8" y="2" width="12" height="20" fill="#fbe3c0" opacity="0.35"/></g><g transform="translate(22 674)"><path d="M1.5 1.5 L8 4 V24.5 L1.5 20.5 Z" fill="#fbc311"/><path d="M1.5 1.5 L4.5 0.5 L10 2 L8 4 Z" fill="#fde29a"/><g transform="translate(7 3.6) scale(0.95)"><rect x="0" y="0" width="16" height="16" rx="1" fill="#1fa9e6"/><path d="M0 3 Q6 4 9 9 Q12 13 16 14 V16 H0 Z" fill="#55b447"/><path d="M0 1.2 Q7 2.4 10.2 7.6 Q12.8 11.6 16 12.4" stroke="#fff" stroke-width="1.3" fill="none"/><path d="M3 0 Q9 1.4 12 6 Q14 9 16 9.6" stroke="#bfe6fa" stroke-width="0.9" fill="none"/></g></g><g transform="translate(22.5 700)"><path d="M1.5 1.5 L8 4 V24.5 L1.5 20.5 Z" fill="#fbc311"/><path d="M1.5 1.5 L4.5 0.5 L10 2 L8 4 Z" fill="#fde29a"/><path d="M9 4.6 H22 M9 8.2 H22 M9 11.8 H16 M9 15.4 H14" stroke="#1fa9e6" stroke-width="2"/><circle cx="17.6" cy="16.4" r="4.6" fill="#fff" stroke="#f18600" stroke-width="1.2"/><circle cx="17.6" cy="16.4" r="2" fill="none" stroke="#f18600" stroke-width="1.1"/></g><g transform="translate(22.5 726)"><path d="M1.5 1.5 L8 4 V24.5 L1.5 20.5 Z" fill="#fbc311"/><path d="M1.5 1.5 L4.5 0.5 L10 2 L8 4 Z" fill="#fde29a"/><path d="M9 4.6 H22 M9 8.2 H22 M9 11.8 H22 M9 15.4 H22" stroke="#5fb946" stroke-width="2"/></g><g transform="translate(567 153) scale(0.667)"><text x="2.0" y="4.05" font-family="Liberation Sans, sans-serif" font-size="5.1" font-weight="bold" text-anchor="middle" fill="#f18600">O</text><text x="10.3" y="4.0" font-family="Liberation Sans, sans-serif" font-size="5" font-weight="bold" text-anchor="start" fill="#f18600" textLength="3.9" lengthAdjust="spacingAndGlyphs">O</text><text x="14.5" y="4.0" font-family="Liberation Sans, sans-serif" font-size="5" font-weight="bold" text-anchor="start" fill="#7d7d7d" textLength="3.7" lengthAdjust="spacingAndGlyphs">H</text><path d="M4.6 4.4 L7.3 6.8 L10.2 4.4 M7.3 6.8 V11.2 M2.2 6.2 L4.4 8" stroke="#7d7d7d" stroke-width="1.5" fill="none"/><path d="M7 10.8 L11.4 13.3 V18.3 L7 20.9 L2.6 18.3 V13.3 Z" stroke="#7d7d7d" stroke-width="1.5" fill="none"/><path d="M8.6 14.6 A2.6 2.6 0 1 0 8.6 17.6" stroke="#7d7d7d" stroke-width="1.4" fill="none"/><text x="15.5" y="9.55" font-family="Liberation Sans, sans-serif" font-size="5.1" font-weight="bold" text-anchor="middle" fill="#f18600">O</text><path d="M11.6 13 L13.8 10" stroke="#7d7d7d" stroke-width="1.5" fill="none"/><path d="M17 11 L20 13.4 L23 11 M20 13.4 V18.6 M17.3 15.6 V18.6" stroke="#7d7d7d" stroke-width="1.5" fill="none"/><text x="19.7" y="23.65" font-family="Liberation Sans, sans-serif" font-size="5.1" font-weight="bold" text-anchor="middle" fill="#f18600">O</text></g><g transform="translate(576 180) scale(0.667)"><text x="2.0" y="4.05" font-family="Liberation Sans, sans-serif" font-size="5.1" font-weight="bold" text-anchor="middle" fill="#f18600">O</text><text x="10.3" y="4.0" font-family="Liberation Sans, sans-serif" font-size="5" font-weight="bold" text-anchor="start" fill="#f18600" textLength="3.9" lengthAdjust="spacingAndGlyphs">O</text><text x="14.5" y="4.0" font-family="Liberation Sans, sans-serif" font-size="5" font-weight="bold" text-anchor="start" fill="#7d7d7d" textLength="3.7" lengthAdjust="spacingAndGlyphs">H</text><path d="M4.6 4.4 L7.3 6.8 L10.2 4.4 M7.3 6.8 V11.2 M2.2 6.2 L4.4 8" stroke="#7d7d7d" stroke-width="1.5" fill="none"/><path d="M7 10.8 L11.4 13.3 V18.3 L7 20.9 L2.6 18.3 V13.3 Z" stroke="#7d7d7d" stroke-width="1.5" fill="none"/><path d="M8.6 14.6 A2.6 2.6 0 1 0 8.6 17.6" stroke="#7d7d7d" stroke-width="1.4" fill="none"/><text x="15.5" y="9.55" font-family="Liberation Sans, sans-serif" font-size="5.1" font-weight="bold" text-anchor="middle" fill="#f18600">O</text><path d="M11.6 13 L13.8 10" stroke="#7d7d7d" stroke-width="1.5" fill="none"/><path d="M17 11 L20 13.4 L23 11 M20 13.4 V18.6 M17.3 15.6 V18.6" stroke="#7d7d7d" stroke-width="1.5" fill="none"/><text x="19.7" y="23.65" font-family="Liberation Sans, sans-serif" font-size="5.1" font-weight="bold" text-anchor="middle" fill="#f18600">O</text></g><g transform="translate(663.5 181)"><path d="M5.4 0.8 H10.6 M6.4 0.8 V6 L1 14 Q0.6 15.4 2 15.4 H14 Q15.4 15.4 15 14 L9.6 6 V0.8" fill="#fff" stroke="#5fb946" stroke-width="1.3"/><path d="M4.6 9.6 H11.4 L14.4 14.2 Q14.6 15 13.8 15 H2.2 Q1.4 15 1.6 14.2 Z" fill="#5fb946"/></g><g transform="translate(987 207)"><rect x="0" y="0.2" width="16" height="3.4" rx="1.5" fill="#5fb946"/><path d="M0 6.4 H16 M3 10.6 H16 M3 14.6 H16" stroke="#5fb946" stroke-width="1.5"/><path d="M0 10.6 H2 M0 14.6 H2" stroke="#5fb946" stroke-width="1"/><circle cx="11.6" cy="11.2" r="4.4" fill="#f18600" stroke="#f6f6f6" stroke-width="0.8"/><text x="11.6" y="14" font-family="Liberation Sans, sans-serif" font-size="8" font-weight="bold" text-anchor="middle" fill="#fff">i</text></g><g transform="translate(1076.5 209.3)"><rect x="0.5" y="0" width="15.5" height="2.4" fill="#00a9f0"/><path d="M3 5.6 H16 M3 9.2 H16 M3 12.8 H16" stroke="#00a9f0" stroke-width="1.4"/><path d="M0.5 5.6 H2 M0.5 9.2 H2 M0.5 12.8 H2" stroke="#00a9f0" stroke-width="1"/></g><g transform="translate(585.5 204.5)"><path d="M8 0.6 L10.3 5.6 L15.6 6.2 L11.7 9.9 L12.8 15.2 L8 12.5 L3.2 15.2 L4.3 9.9 L0.4 6.2 L5.7 5.6 Z" fill="#00a9f0"/></g><g transform="translate(585.5 222.5)"><path d="M0.2 3.2 H13.6" stroke="#f18600" stroke-width="1"/><path d="M3 3.4 A4 3.6 0 0 1 11 3.4" stroke="#f18600" stroke-width="1.5" fill="none"/><circle cx="1" cy="3.2" r="0.9" fill="#f08a1c"/><circle cx="13" cy="3.2" r="0.9" fill="#f08a1c"/><path d="M5.6 11.6 V4 Q5.6 2.8 6.8 2.8 Q8 2.8 8 4 V8 H9.6 Q10.4 7.6 11 8.4 Q12 8 12.4 9 Q13.6 8.8 14.2 9.8 V14.2 L13.4 15.8 H6 L2.4 12.4 Q3.2 10.8 5.6 11.6 Z" fill="#fff" stroke="#1fa9e6" stroke-width="1"/></g><g transform="translate(585.5 385.3) scale(0.667)"><path d="M0.1 13.2 L3.2 20 L5.1 17.6 L3.8 14.6 Z" fill="#5fb946"/><path d="M4.9 7.8 L9 9.4 Q12.6 11.6 13.9 14.6 L14 16.2 L5.4 11.2 Z" fill="#5fb946"/><path d="M9.9 2.8 L14 4.4 Q17.6 6.6 18.9 9.6 L19 11.2 L10.4 6.2 Z" fill="#5fb946"/><path d="M3.3 10.1 L0.8 12.5 L11.3 19 L14.2 16.4 Z" fill="#00a9f0"/><path d="M8.3 5 L5.8 7.5 L16.4 14 L19.2 11.4 Z" fill="#00a9f0"/><path d="M13.5 0 L10.8 2.5 L20 7.6 Q22.6 6.6 23.9 4.2 Q21 4.6 19 3.2 Z" fill="#00a9f0"/></g><g transform="translate(585.5 403.3) scale(0.667)"><path d="M0.1 13.2 L3.2 20 L5.1 17.6 L3.8 14.6 Z" fill="#5fb946"/><path d="M4.9 7.8 L9 9.4 Q12.6 11.6 13.9 14.6 L14 16.2 L5.4 11.2 Z" fill="#5fb946"/><path d="M9.9 2.8 L14 4.4 Q17.6 6.6 18.9 9.6 L19 11.2 L10.4 6.2 Z" fill="#5fb946"/><path d="M3.3 10.1 L0.8 12.5 L11.3 19 L14.2 16.4 Z" fill="#00a9f0"/><path d="M8.3 5 L5.8 7.5 L16.4 14 L19.2 11.4 Z" fill="#00a9f0"/><path d="M13.5 0 L10.8 2.5 L20 7.6 Q22.6 6.6 23.9 4.2 Q21 4.6 19 3.2 Z" fill="#00a9f0"/></g><g transform="translate(585.5 421.3) scale(0.667)"><path d="M0.1 13.2 L3.2 20 L5.1 17.6 L3.8 14.6 Z" fill="#5fb946"/><path d="M4.9 7.8 L9 9.4 Q12.6 11.6 13.9 14.6 L14 16.2 L5.4 11.2 Z" fill="#5fb946"/><path d="M9.9 2.8 L14 4.4 Q17.6 6.6 18.9 9.6 L19 11.2 L10.4 6.2 Z" fill="#5fb946"/><path d="M3.3 10.1 L0.8 12.5 L11.3 19 L14.2 16.4 Z" fill="#00a9f0"/><path d="M8.3 5 L5.8 7.5 L16.4 14 L19.2 11.4 Z" fill="#00a9f0"/><path d="M13.5 0 L10.8 2.5 L20 7.6 Q22.6 6.6 23.9 4.2 Q21 4.6 19 3.2 Z" fill="#00a9f0"/></g><g transform="translate(585.5 439.3) scale(0.667)"><path d="M0.1 13.2 L3.2 20 L5.1 17.6 L3.8 14.6 Z" fill="#5fb946"/><path d="M4.9 7.8 L9 9.4 Q12.6 11.6 13.9 14.6 L14 16.2 L5.4 11.2 Z" fill="#5fb946"/><path d="M9.9 2.8 L14 4.4 Q17.6 6.6 18.9 9.6 L19 11.2 L10.4 6.2 Z" fill="#5fb946"/><path d="M3.3 10.1 L0.8 12.5 L11.3 19 L14.2 16.4 Z" fill="#00a9f0"/><path d="M8.3 5 L5.8 7.5 L16.4 14 L19.2 11.4 Z" fill="#00a9f0"/><path d="M13.5 0 L10.8 2.5 L20 7.6 Q22.6 6.6 23.9 4.2 Q21 4.6 19 3.2 Z" fill="#00a9f0"/></g></svg>
<svg class="a" style="left:0;top:1032px" width="1920" height="48" viewBox="0 1032 1920 48"><defs><linearGradient id="wg" x1="0" y1="0" x2="1" y2="1"><stop offset="0" stop-color="#4fc6ff"/><stop offset="1" stop-color="#0a64c2"/></linearGradient><linearGradient id="cop" x1="0" y1="0" x2="1" y2="1"><stop offset="0" stop-color="#2aa8e8"/><stop offset="0.35" stop-color="#7c5ce6"/><stop offset="0.65" stop-color="#e85a8e"/><stop offset="1" stop-color="#f5a63a"/></linearGradient><linearGradient id="edge" x1="0" y1="0" x2="1" y2="1"><stop offset="0" stop-color="#35c1b0"/><stop offset="0.5" stop-color="#1b9de2"/><stop offset="1" stop-color="#0b5fb5"/></linearGradient><linearGradient id="pks" x1="0" y1="0" x2="1" y2="1"><stop offset="0" stop-color="#1aa0e0"/><stop offset="1" stop-color="#2a7fc0"/></linearGradient><linearGradient id="tv" x1="0" y1="1" x2="1" y2="0"><stop offset="0" stop-color="#9a9a9a"/><stop offset="1" stop-color="#ffffff"/></linearGradient></defs><g transform="translate(20 1048)"><path d="M0.5 10 Q2 2 10.5 1.6 Q19 2 20.5 10 Q15 8.6 10.5 9 Q6 8.6 0.5 10 Z" fill="#74baf6"/><path d="M10.5 1.6 Q13 5 13.5 9.2 Q11 9 7.5 9.2 Q8 5 10.5 1.6 Z" fill="#4a9ff0"/><path d="M10.4 9 V16 Q10.4 18.4 8.4 18.4 Q6.6 18.4 6.6 16.4" stroke="#7d7d7d" stroke-width="1.6" fill="none"/></g><circle cx="39.3" cy="1047" r="8" fill="#c42b1c"/><g transform="translate(489 1048.5)"><rect x="0" y="0" width="7.4" height="7.4" fill="url(#wg)"/><rect x="8.3" y="0" width="7.4" height="7.4" fill="url(#wg)"/><rect x="0" y="8.3" width="7.4" height="7.4" fill="url(#wg)"/><rect x="8.3" y="8.3" width="7.4" height="7.4" fill="url(#wg)"/></g><rect x="515" y="1040.5" width="218" height="31" rx="15.5" fill="#fafafa" stroke="#dddddd" stroke-width="1"/><g transform="translate(526 1049)"><circle cx="6" cy="6" r="5" fill="none" stroke="#222" stroke-width="1.5"/><path d="M9.6 9.8 L13.6 14" stroke="#222" stroke-width="1.7" stroke-linecap="round"/></g><rect x="1315.5" y="1037" width="24" height="38" rx="4" fill="#fafafa" stroke="#e6e6e6" stroke-width="0.8"/><g transform="translate(744 1048)"><rect x="3.6" y="0.6" width="12" height="11" rx="1" fill="url(#tv)"/><rect x="0" y="4" width="12" height="11.4" rx="1" fill="#222"/><rect x="3.6" y="4" width="8.4" height="7.6" fill="#b5b5b5"/></g><g transform="translate(776 1048)"><path d="M5 1 Q8 -0.4 10 2 L12 5 Q15.6 5 15.6 8 Q15.6 10 14 11.6 L11 15 Q8 16.4 6 14 L4 11 Q0.4 11 0.4 8 Q0.4 6 2 4.4 Z" fill="url(#cop)"/><path d="M8.6 4.6 L6.4 8.4 H9.4 L7.2 11.6" stroke="#fff" stroke-width="1.6" fill="none"/></g><g transform="translate(808 1048)"><path d="M0 2 Q0 1 1 1 H5.4 L7 2.6 H15 Q16 2.6 16 3.6 V14 Q16 15 15 15 H1 Q0 15 0 14 Z" fill="#f6b92f"/><path d="M0 5 H16 V14 Q16 15 15 15 H1 Q0 15 0 14 Z" fill="#fcd462"/><rect x="2.6" y="11" width="10.8" height="3.2" rx="1" fill="#1d86d8"/></g><g transform="translate(840 1048)"><circle cx="8" cy="8" r="7.8" fill="url(#edge)"/><path d="M3 9 Q4 3.6 9 3.6 Q14 3.6 14.4 8 Q12 6.6 9 7 Q6.6 7.6 7 10.4 Q4 11 3 9 Z" fill="#7fe0a0" opacity="0.75"/><circle cx="9.6" cy="9.4" r="2" fill="#eef6ff"/><rect x="0.4" y="10.6" width="7.4" height="5" rx="0.6" fill="#b0741f"/><rect x="0.4" y="12.4" width="7.4" height="1" fill="#7c4f12"/></g><g transform="translate(872 1048)"><path d="M4.6 3.4 V2.4 Q4.6 0.8 6.2 0.8 H9.8 Q11.4 0.8 11.4 2.4 V3.4" stroke="#2a9be8" stroke-width="1.2" fill="none"/><rect x="0.4" y="3.2" width="15.2" height="12.4" rx="2" fill="#12477f"/><rect x="4.2" y="5.6" width="3.4" height="3.4" fill="#f25022"/><rect x="8.4" y="5.6" width="3.4" height="3.4" fill="#7fba00"/><rect x="4.2" y="9.8" width="3.4" height="3.4" fill="#00a4ef"/><rect x="8.4" y="9.8" width="3.4" height="3.4" fill="#ffb900"/></g><g transform="translate(904 1048)"><rect x="0" y="0" width="16" height="16" fill="#0f7ad1"/><circle cx="8" cy="8" r="5.6" fill="none" stroke="#e8f3fc" stroke-width="1.1"/><text x="8" y="9.3" font-family="Liberation Sans, sans-serif" font-size="3.6" font-weight="bold" text-anchor="middle" fill="#e8f3fc">DELL</text></g><g transform="translate(936 1048)"><path d="M5 3 L11 0.6 L15.6 4 V13 Q15.6 14.6 14 14.6 H6 Z" fill="#28a8ea"/><path d="M6 8 L15.6 5 V13 Q15.6 14.6 14 14.6 H6 Z" fill="#0f5fc0"/><path d="M10 10 L15.6 7 V13 Q15.6 14.6 14 14.6 H10 Z" fill="#7fd0fb"/><rect x="0.4" y="4.6" width="9" height="9" rx="1.6" fill="#0f63c4"/><text x="4.9" y="11.4" font-family="Liberation Sans, sans-serif" font-size="6.4" font-weight="bold" text-anchor="middle" fill="#fff">O</text></g><g transform="translate(968 1048)"><path d="M1 8.4 L3.6 5.8 L7.6 9.8 L5 12.4 Z" fill="#2563c9"/><path d="M5 12.4 L2.6 10 L12.6 1.6 L15.4 4.4 L7.4 14.6 Z" fill="#3c8ff0"/></g><g transform="translate(1000 1048)"><circle cx="11.6" cy="3.6" r="2.2" fill="#7b83eb"/><circle cx="6.4" cy="3" r="2.6" fill="#5b5fc7"/><path d="M8 6.4 H15 Q15.8 6.4 15.8 7.2 V11.6 Q15.8 14.4 12.8 14.8 Q10 14.8 9 13 Z" fill="#7b83eb"/><path d="M3 6.4 H11.4 V12 Q11.4 15.6 7.4 15.6 Q3 15.6 3 12 Z" fill="#5b5fc7"/><rect x="0.2" y="5.4" width="8.2" height="8.2" rx="1.4" fill="#4a4fb8"/><text x="4.3" y="12" font-family="Liberation Sans, sans-serif" font-size="6.4" font-weight="bold" text-anchor="middle" fill="#fff">T</text></g><g transform="translate(1032 1048)"><rect x="0" y="0" width="16" height="16" fill="#fff"/><rect x="1" y="1.4" width="14" height="13.4" rx="2" fill="#2ea2ee"/><rect x="1" y="1.4" width="14" height="3.6" rx="1.6" fill="#1473d0"/><g fill="#e8f5ff"><rect x="3.4" y="7" width="1.8" height="1.8"/><rect x="7.1" y="7" width="1.8" height="1.8"/><rect x="10.8" y="7" width="1.8" height="1.8"/><rect x="3.4" y="10.6" width="1.8" height="1.8"/><rect x="7.1" y="10.6" width="1.8" height="1.8"/><rect x="10.8" y="10.6" width="1.8" height="1.8"/></g></g><g transform="translate(1064 1048)"><circle cx="8" cy="8" r="8" fill="#1ed760"/><path d="M3.6 5.6 Q8.4 4 12.8 6.4 M4.2 8.2 Q8.2 7 11.8 9 M4.8 10.8 Q8 10 10.8 11.4" stroke="#111" stroke-width="1.3" fill="none" stroke-linecap="round"/></g><g transform="translate(1096 1048)"><circle cx="8" cy="8" r="8" fill="#fbc116"/><path d="M8 8 L1.07 4 A8 8 0 0 1 14.93 4 Z" fill="#e33b2e"/><path d="M8 8 L1.07 4 A8 8 0 0 0 8 16 L11.2 10 Z" fill="#2ea14c"/><path d="M1.07 4 A8 8 0 0 1 14.93 4 H8 Z" fill="#e33b2e"/><circle cx="8" cy="8" r="3.7" fill="#fff"/><circle cx="8" cy="8" r="2.9" fill="#3b7ded"/></g><g transform="translate(1127 1048)"><rect x="3" y="1" width="12.6" height="14" rx="1.6" fill="#41a5ee"/><rect x="3" y="5.6" width="12.6" height="4.8" fill="#2b7cd3"/><rect x="3" y="10.4" width="12.6" height="4.6" rx="1.2" fill="#185abd"/><rect x="0.4" y="4.4" width="8" height="8" rx="1.2" fill="#103f91"/><text x="4.4" y="10.6" font-family="Liberation Sans, sans-serif" font-size="5.4" font-weight="bold" text-anchor="middle" fill="#fff">W</text></g><g transform="translate(1159.5 1048)"><circle cx="9" cy="8" r="7" fill="#ed6c47"/><path d="M9 1 A7 7 0 0 1 16 8 H9 Z" fill="#ff8f6b"/><path d="M9 15 A7 7 0 0 0 16 8 H9 Z" fill="#d35230"/><rect x="0.4" y="4.4" width="8" height="8" rx="1.2" fill="#c43e1c"/><text x="4.5" y="10.7" font-family="Liberation Sans, sans-serif" font-size="5.8" font-weight="bold" text-anchor="middle" fill="#fff">P</text></g><g transform="translate(1191.5 1048)"><rect x="0.6" y="1.6" width="13.6" height="12.8" rx="1" fill="url(#pks)"/><path d="M3.8 4.4 L9.4 9.8 L11.2 6 M9.4 9.8 L3.6 10.4 M9.4 9.8 L8 14.4 M9.4 9.8 L12.4 13" stroke="#fff" stroke-width="1.1" fill="none"/><circle cx="3.6" cy="4.2" r="1.7" fill="#f0692a"/><rect x="7" y="2.8" width="2" height="2" fill="#fff"/><circle cx="11.3" cy="5.9" r="1.3" fill="#bfe3f7"/><circle cx="9.4" cy="9.9" r="1.5" fill="#fff"/><circle cx="3.4" cy="10.4" r="1.1" fill="#bfe3f7"/><circle cx="8" cy="14.6" r="1.2" fill="#7cc04a"/><circle cx="14" cy="2.6" r="1.9" fill="#fff"/></g><g transform="translate(1224 1048)"><path d="M8 0.6 A7.4 7.4 0 1 1 4.2 14.4 L0.8 15.4 L1.8 12 A7.4 7.4 0 0 1 8 0.6 Z" fill="#fff" stroke="#1faa53" stroke-width="1.4"/><path d="M5.2 4.4 Q4.4 5.6 5.6 7.8 Q7.2 10.4 9.8 11.4 Q11.2 11.6 11.8 10.2 L10 9.2 L9.2 10 Q7.4 9.2 6.6 7.4 L7.4 6.6 L6.4 4.4 Z" fill="#1faa53"/></g><g transform="translate(1256 1048)"><rect x="3.4" y="0.8" width="12.2" height="14.4" rx="1.4" fill="#21a366"/><rect x="9.4" y="0.8" width="6.2" height="4.8" fill="#33c481"/><rect x="3.4" y="5.6" width="6" height="4.8" fill="#107c41"/><rect x="3.4" y="10.4" width="12.2" height="4.8" rx="1" fill="#185c37"/><rect x="0.2" y="4.4" width="8" height="8" rx="1.2" fill="#0e6b38"/><text x="4.2" y="10.6" font-family="Liberation Sans, sans-serif" font-size="5.8" font-weight="bold" text-anchor="middle" fill="#fff">X</text></g><g transform="translate(1288 1048)"><rect x="0.6" y="0.8" width="14.8" height="14.4" rx="2.4" fill="#b30b00"/><path d="M3 12.2 Q6.4 10 8 4 Q8.4 2.6 7.6 2.6 Q6.6 2.8 7.4 5.4 Q8.8 9 13 10 Q14 10.2 13.4 9.4 Q11 8.6 3.4 11.8" stroke="#fff" stroke-width="1" fill="none"/></g><g transform="translate(1320 1048)"><rect x="0.6" y="1.6" width="13.6" height="12.8" rx="1" fill="url(#pks)"/><path d="M3.8 4.4 L9.4 9.8 L11.2 6 M9.4 9.8 L3.6 10.4 M9.4 9.8 L8 14.4 M9.4 9.8 L12.4 13" stroke="#fff" stroke-width="1.1" fill="none"/><circle cx="3.6" cy="4.2" r="1.7" fill="#f0692a"/><rect x="7" y="2.8" width="2" height="2" fill="#fff"/><circle cx="11.3" cy="5.9" r="1.3" fill="#bfe3f7"/><circle cx="9.4" cy="9.9" r="1.5" fill="#fff"/><circle cx="3.4" cy="10.4" r="1.1" fill="#bfe3f7"/><circle cx="8" cy="14.6" r="1.2" fill="#7cc04a"/><circle cx="14" cy="2.6" r="1.9" fill="#fff"/></g><g transform="translate(1352 1048)"><rect x="0" y="0" width="16" height="16" rx="1.2" fill="#1a9bd6"/><path d="M0 3.4 Q6 4 9.4 9 Q12.4 13 16 14 V16 H0 Z" fill="#55b447"/><path d="M0 0 H7 Q3 2 1.4 0.6 Z" fill="#bfe7fa"/><path d="M0 2.6 Q6.6 3.6 10 8.4 Q12.6 12 16 13" stroke="#bfe7fa" stroke-width="0.9" fill="none"/></g><g transform="translate(1384 1048)"><rect x="2" y="0.4" width="12" height="15.4" rx="0.8" fill="#6f7a86"/><rect x="3.4" y="1.8" width="9.2" height="3" fill="#5fd0ea"/><g fill="#e6eaee"><rect x="3.4" y="6.2" width="2.4" height="2.2"/><rect x="6.8" y="6.2" width="2.4" height="2.2"/><rect x="10.2" y="6.2" width="2.4" height="2.2"/><rect x="3.4" y="9.4" width="2.4" height="2.2"/><rect x="6.8" y="9.4" width="2.4" height="2.2"/><rect x="3.4" y="12.6" width="2.4" height="2.2"/><rect x="6.8" y="12.6" width="2.4" height="2.2"/></g><rect x="10.2" y="9.4" width="2.4" height="5.4" fill="#1f6fc0"/></g><g transform="translate(1416 1048)"><rect x="1" y="1.4" width="14" height="13.4" rx="2.4" fill="#3a0a8c"/><circle cx="7.6" cy="8" r="3.2" fill="none" stroke="#fff" stroke-width="1.3"/><path d="M9.4 9.8 L12.2 12.6" stroke="#fff" stroke-width="1.4"/><path d="M3 4.6 V3.4 H4.2 M11.8 3.4 H13 V4.6 M3 11.4 V12.6 H4.2" stroke="#fff" stroke-width="0.8" fill="none"/></g><circle cx="951.8" cy="1046" r="2" fill="#1a78d8"/><circle cx="984" cy="1046" r="2" fill="#1a78d8"/><circle cx="1015.6" cy="1046" r="2" fill="#1a78d8"/><rect x="814" y="1072" width="4" height="2.6" rx="1.3" fill="#858585"/><rect x="846" y="1072" width="4" height="2.6" rx="1.3" fill="#858585"/><rect x="942" y="1072" width="4" height="2.6" rx="1.3" fill="#858585"/><rect x="1006" y="1072" width="4" height="2.6" rx="1.3" fill="#858585"/><rect x="1070" y="1072" width="4" height="2.6" rx="1.3" fill="#858585"/><rect x="1102" y="1072" width="4" height="2.6" rx="1.3" fill="#858585"/><rect x="1134" y="1072" width="4" height="2.6" rx="1.3" fill="#858585"/><rect x="1166" y="1072" width="4" height="2.6" rx="1.3" fill="#858585"/><rect x="1198" y="1072" width="4" height="2.6" rx="1.3" fill="#858585"/><rect x="1230" y="1072" width="4" height="2.6" rx="1.3" fill="#858585"/><rect x="1262" y="1072" width="4" height="2.6" rx="1.3" fill="#858585"/><rect x="1294" y="1072" width="4" height="2.6" rx="1.3" fill="#858585"/><rect x="1326" y="1072" width="4" height="2.6" rx="1.3" fill="#858585"/><rect x="1358" y="1072" width="4" height="2.6" rx="1.3" fill="#858585"/><rect x="1390" y="1072" width="4" height="2.6" rx="1.3" fill="#858585"/><rect x="1422" y="1072" width="4" height="2.6" rx="1.3" fill="#858585"/><g transform="translate(1621 1052.5)"><path d="M0.6 6 L5.2 1.2 L9.8 6" stroke="#222" stroke-width="1.5" fill="none"/></g><g transform="translate(1650 1050)"><path d="M3.6 11.2 Q0.2 11.2 0.2 8.2 Q0.2 5.6 2.8 5.2 Q3.4 1.6 6.6 0.6 Q10 0 11.6 3.2 Q14 2.6 15 5 Q16.4 6 16.2 8.4 Q16 11.2 13.2 11.2 Z" fill="#2294f2"/><path d="M2.8 5.2 Q6 3.4 9 6.4 L5 11.2 H3.6 Q0.2 11.2 0.2 8.2 Q0.2 5.6 2.8 5.2 Z" fill="#1170d6"/><path d="M9 6.4 Q12.4 4.2 15.6 6 Q16.8 8 15.4 10.4 Q14.6 11.2 13.2 11.2 H5 Z" fill="#56c0fb"/></g><g transform="translate(1684 1048)"><rect x="3.6" y="0.4" width="4.6" height="9.2" rx="2.3" fill="none" stroke="#2b7de0" stroke-width="1.3"/><path d="M0.8 7 Q0.8 12 5.9 12 Q11 12 11 7 M5.9 12 V15.4" stroke="#2b7de0" stroke-width="1.3" fill="none" stroke-linecap="round"/></g><g transform="translate(1758 1049.5)"><path d="M0.6 4.6 Q8 -2.4 15.6 4.6 M3.2 7.2 Q8 2.8 13 7.2 M5.6 9.6 Q8 7.6 10.6 9.6" stroke="#222" stroke-width="1.3" fill="none" stroke-linecap="round"/><circle cx="8.1" cy="11.2" r="1.1" fill="#222"/></g><g transform="translate(1782 1050)"><path d="M0.8 4.2 H3.2 L6.6 1 V11.4 L3.2 8.2 H0.8 Z" fill="none" stroke="#222" stroke-width="1.2" stroke-linejoin="round"/><path d="M8.8 4 Q10.2 6.2 8.8 8.4 M10.8 2.4 Q13.2 6.2 10.8 10" stroke="#222" stroke-width="1.1" fill="none" stroke-linecap="round"/><path d="M12.8 0.8 Q16 6.2 12.8 11.6" stroke="#aaa" stroke-width="1" fill="none" stroke-linecap="round"/></g><g transform="translate(1806 1048)"><rect x="2.6" y="4.4" width="11.4" height="7.6" rx="1.6" fill="none" stroke="#222" stroke-width="1.3"/><rect x="14.6" y="6.6" width="1.6" height="3.4" rx="0.8" fill="#222"/><path d="M4.6 0.4 Q8 2.4 7.4 6.4 Q6.4 10 1.6 9.6 Q0 5.4 4.6 0.4 Z" fill="#222"/><path d="M1 11.4 L5.6 4.6" stroke="#eee" stroke-width="0.9"/></g></svg>
<span class="t" style="left:36.75px;top:1040px;font-size:11px;line-height:14px;color:#fff;">4</span>
<span class="t" style="left:551.49px;top:1048px;font-size:13.5px;line-height:18px;color:#5c5c5c;letter-spacing:-0.317px;">Search</span>
<span class="t" style="left:1716.50px;top:1050px;font-size:11px;line-height:14px;color:#1f1f1f;letter-spacing:0.044px;">ENG</span>
<span class="t" style="left:1872.02px;top:1041px;font-size:11.5px;line-height:15px;color:#1f1f1f;letter-spacing:0.176px;">13:46</span>
<span class="t" style="left:1839.02px;top:1057px;font-size:11.5px;line-height:15px;color:#1f1f1f;letter-spacing:0.545px;">19/12/2025</span>
<svg class="a" style="left:0px;top:716px;overflow:hidden" width="266" height="284" viewBox="-69.12 0 1149.12 1226.88"><defs>
<clipPath id="pclip"><rect x="-70" y="18" width="1106" height="1220"/></clipPath>
<clipPath id="ccirc"><circle cx="665.3" cy="386.6" r="648"/></clipPath>
<filter id="bl2" x="-10%" y="-10%" width="120%" height="120%"><feGaussianBlur stdDeviation="3"/></filter>
<filter id="bl6" x="-20%" y="-20%" width="140%" height="140%"><feGaussianBlur stdDeviation="7"/></filter>
<filter id="bl14" x="-30%" y="-30%" width="160%" height="160%"><feGaussianBlur stdDeviation="16"/></filter>
<filter id="hairf" x="-20%" y="-20%" width="140%" height="140%"><feTurbulence type="fractalNoise" baseFrequency="0.03" numOctaves="3" seed="7" result="n"/><feDisplacementMap in="SourceGraphic" in2="n" scale="26" xChannelSelector="R" yChannelSelector="G" result="d"/><feGaussianBlur in="d" stdDeviation="2.2"/></filter>
<filter id="hairt" x="0" y="0" width="100%" height="100%"><feTurbulence type="fractalNoise" baseFrequency="0.03 0.05" numOctaves="2" seed="3" result="n"/><feColorMatrix in="n" type="matrix" values="0 0 0 0 0.42  0 0 0 0 0.36  0 0 0 0 0.30  0 0 0 2.2 -1.15" result="c"/><feComposite in="c" in2="SourceGraphic" operator="in"/><feGaussianBlur stdDeviation="1.5"/></filter>
<filter id="shb" x="-20%" y="-20%" width="140%" height="140%"><feGaussianBlur stdDeviation="34"/></filter>
<linearGradient id="wall" x1="0" y1="0" x2="0" y2="1"><stop offset="0" stop-color="#a1987f"/><stop offset="0.12" stop-color="#aea793"/><stop offset="0.3" stop-color="#bebdb4"/><stop offset="0.5" stop-color="#c7c8c5"/><stop offset="1" stop-color="#cbccca"/></linearGradient>
<linearGradient id="wallr" x1="0" y1="0" x2="1" y2="0"><stop offset="0" stop-color="#a9a793" stop-opacity="0"/><stop offset="1" stop-color="#a3a18c" stop-opacity="0.85"/></linearGradient>
<radialGradient id="skin" cx="0.62" cy="0.2" r="0.75"><stop offset="0" stop-color="#f1e3da"/><stop offset="0.18" stop-color="#d6b6a4"/><stop offset="0.5" stop-color="#b8917c"/><stop offset="1" stop-color="#8f7363"/></radialGradient>
<linearGradient id="hand" x1="0" y1="0" x2="1" y2="1"><stop offset="0" stop-color="#e2a78d"/><stop offset="1" stop-color="#c77f68"/></linearGradient>
<linearGradient id="rad" x1="0" y1="0" x2="1" y2="0"><stop offset="0" stop-color="#d2d2ce"/><stop offset="1" stop-color="#e2e2df"/></linearGradient>
<pattern id="rib" width="9" height="9" patternUnits="userSpaceOnUse" patternTransform="rotate(-14)"><rect width="9" height="9" fill="#1e1e18"/><rect y="0" width="9" height="3.6" fill="#3a3b30"/></pattern>
<pattern id="radp" width="14" height="10" patternUnits="userSpaceOnUse"><rect width="14" height="10" fill="#dcdcd9"/><rect x="0" width="3" height="10" fill="#c6c6c2"/></pattern>
</defs><g clip-path="url(#pclip)"><circle cx="665.3" cy="412" r="655" fill="#000" opacity="0.21" filter="url(#shb)"/></g><g clip-path="url(#pclip)"><g clip-path="url(#ccirc)"><rect x="0" y="0" width="1080" height="1080" fill="url(#wall)"/><rect x="620" y="0" width="460" height="760" fill="url(#wallr)"/><ellipse cx="170" cy="470" rx="260" ry="240" fill="#c9cac8" opacity="0.6" filter="url(#bl14)"/><g filter="url(#bl2)"><rect x="760" y="560" width="120" height="110" fill="#c4c4bf"/><rect x="870" y="480" width="180" height="215" fill="url(#radp)"/><rect x="870" y="480" width="180" height="12" fill="#e6e6e3"/><path d="M915 618 H1050 V770 H935 L910 690 Z" fill="#e4e5e8"/><path d="M830 560 V670" stroke="#e2e2e2" stroke-width="5"/><path d="M60 624 L345 616 V740 L90 760 Z" fill="#2a2b35"/><path d="M762 368 Q800 352 850 357 Q868 360 866 380 L858 540 Q856 566 830 572 L760 588 Q748 500 752 400 Q752 372 762 368 Z" fill="#171717"/><path d="M960 740 Q1010 760 1040 800 V740 Z" fill="#1c1c1c"/><path d="M120 735 Q220 690 330 640 L360 600 L760 600 L830 690 Q960 700 1040 790 V1090 H60 Z" fill="#1b1a15"/><path d="M690 760 L830 695 Q960 705 1040 795 V1090 H600 Z" fill="url(#rib)" opacity="0.9"/><path d="M205 800 Q260 700 350 650 L430 860 L380 930 Q280 880 205 800 Z" fill="#17160f"/><path d="M335 640 Q350 600 380 610 L420 760 Q430 840 470 880 L420 900 Q360 800 335 640 Z" fill="#0f0e0a"/><path d="M760 600 Q800 640 832 692 Q770 760 700 900 L640 1030 L560 1030 L600 900 Q700 800 720 700 Z" fill="#14120e"/><path d="M832 695 Q740 800 620 1030" stroke="#67664a" stroke-width="5" fill="none"/><path d="M430 760 Q540 900 690 770 L660 900 Q560 940 470 890 Z" fill="#2a1f1b"/><ellipse cx="348" cy="535" rx="17" ry="48" fill="#b88268"/><ellipse cx="748" cy="525" rx="14" ry="45" fill="#c98a74"/><path d="M365 470 Q370 350 470 335 Q560 320 650 335 Q735 360 742 470 Q750 600 715 720 Q690 820 630 870 Q570 905 500 880 Q430 840 400 730 Q360 600 365 470 Z" fill="url(#skin)"/><path d="M410 730 Q440 790 500 780 Q560 760 620 780 Q680 780 705 720 Q690 830 630 872 Q570 905 500 880 Q435 845 410 730 Z" fill="#9a806f" opacity="0.95"/><path d="M470 770 Q560 735 650 765 Q640 790 560 800 Q500 800 470 770 Z" fill="#86705f" opacity="0.8"/><path d="M535 795 Q570 780 605 795 Q570 822 535 795 Z" fill="#a5605c"/><path d="M540 640 Q530 720 515 745 Q560 765 610 742 Q590 700 585 640 Z" fill="#c99a83"/><path d="M520 745 Q560 770 608 745" stroke="#7e5a4b" stroke-width="6" fill="none"/></g><ellipse cx="675" cy="400" rx="55" ry="45" fill="#f7ece4" opacity="0.9" filter="url(#bl14)"/><ellipse cx="450" cy="520" rx="50" ry="70" fill="#a87a63" opacity="0.6" filter="url(#bl14)"/><g filter="url(#bl2)"></g><path d="M352 510 Q322 420 338 345 Q326 300 368 268 Q398 212 450 206 Q490 166 560 182 Q622 166 662 212 Q718 232 734 290 Q764 350 750 455 L738 475 Q728 395 684 368 Q622 338 560 350 Q500 338 455 378 Q402 398 388 455 L372 525 Z" fill="#2b2621" filter="url(#hairf)"/><path d="M352 510 Q322 420 338 345 Q326 300 368 268 Q398 212 450 206 Q490 166 560 182 Q622 166 662 212 Q718 232 734 290 Q764 350 750 455 L738 475 Q728 395 684 368 Q622 338 560 350 Q500 338 455 378 Q402 398 388 455 L372 525 Z" fill="#2b2621" filter="url(#hairt)" opacity="0.32"/><g filter="url(#bl2)"><path d="M395 572 Q450 548 525 570" stroke="#5a4337" stroke-width="10" fill="none"/><path d="M590 568 Q650 548 705 566" stroke="#6a4e40" stroke-width="9" fill="none"/></g><g fill="none" stroke="#0f0f10" stroke-linejoin="round"><path d="M378 606 Q460 596 545 604 Q548 650 528 678 Q470 690 405 680 Q380 650 378 606 Z" stroke-width="9" fill="#a9806c" fill-opacity="0.45"/><path d="M582 604 Q660 596 728 604 Q728 650 708 672 Q650 684 600 674 Q580 640 582 604 Z" stroke-width="9" fill="#c9a08a" fill-opacity="0.45"/><path d="M350 603 Q460 588 548 602 H582 Q660 590 748 598" stroke-width="13"/><path d="M545 612 Q563 604 582 612" stroke-width="8"/><path d="M378 600 Q362 560 360 505" stroke-width="6"/><path d="M730 598 Q745 560 745 495" stroke-width="6"/></g><g filter="url(#bl2)"><ellipse cx="470" cy="628" rx="26" ry="9" fill="#2a1f1b"/><ellipse cx="645" cy="626" rx="24" ry="8" fill="#2a1f1b"/><path d="M545 778 Q520 770 505 790 L430 880 Q385 930 362 960 Q420 985 480 1000 L560 1030 L570 960 Q560 930 520 925 L470 940 Q520 850 552 800 Q555 785 545 778 Z" fill="url(#hand)"/><path d="M480 905 Q530 885 565 900 Q560 930 540 940 Q500 930 480 905 Z" fill="#d18c74"/><path d="M470 942 Q520 925 556 945 M490 985 Q530 975 556 992" stroke="#a8614f" stroke-width="4" fill="none"/><ellipse cx="528" cy="790" rx="16" ry="11" fill="#eec0ac" transform="rotate(-40 528 790)"/></g></g></g></svg>
</body></html>
